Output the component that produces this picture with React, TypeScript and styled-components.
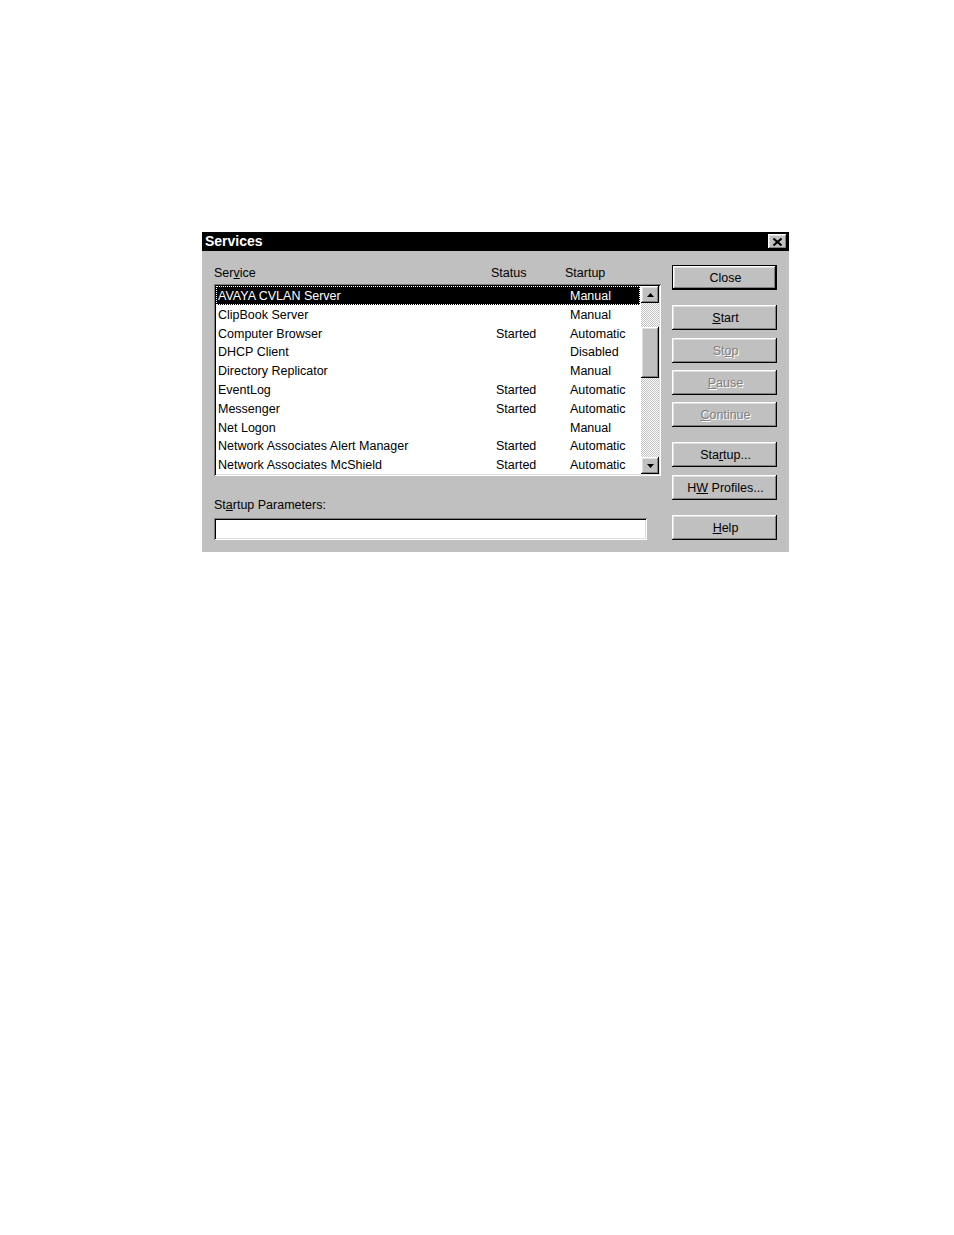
import React from 'react';
import styled, { createGlobalStyle, css } from 'styled-components';

const Global = createGlobalStyle`
  html, body { margin: 0; padding: 0; background: #fff; }
  body { font-family: "Liberation Sans", Arial, sans-serif; color: #000; }
`;

const Page = styled.div`
  width: 954px;
  height: 1235px;
  box-sizing: border-box;
  padding: 232px 0 0 202px;
`;

const Window = styled.div`
  width: 587px;
  height: 320px;
  background: #c0c0c0;
  display: flex;
  flex-direction: column;
`;

const TitleBar = styled.div`
  height: 19px;
  flex: none;
  background: #000;
  display: flex;
  align-items: center;
  justify-content: space-between;
  padding: 0 2px 0 3px;
`;

const Title = styled.span`
  color: #fff;
  font-weight: bold;
  font-size: 14px;
  line-height: 19px;
`;

const raised = css`
  box-shadow: inset -1px -1px #000, inset 1px 1px #fff, inset -2px -2px #808080, inset 2px 2px #dfdfdf;
`;

const sunken = css`
  box-shadow: inset 1px 1px #808080, inset -1px -1px #fff, inset 2px 2px #000, inset -2px -2px #dfdfdf;
`;

const TitleClose = styled.div`
  width: 19px;
  height: 15px;
  background: #c0c0c0;
  ${raised};
  display: flex;
  align-items: center;
  justify-content: center;
`;

const Body = styled.div`
  flex: 1;
  display: flex;
  gap: 11px;
  padding: 14px 12px 12px 12px;
`;

const LeftCol = styled.div`
  width: 447px;
  display: flex;
  flex-direction: column;
`;

const HeaderRow = styled.div`
  display: grid;
  grid-template-columns: 277px 74px 1fr;
  font-size: 12.5px;
  line-height: 15px;
  margin-top: 1px;
  margin-bottom: 3px;
`;

const ListBox = styled.div`
  height: 192px;
  box-sizing: border-box;
  padding: 2px;
  background: #fff;
  ${sunken};
  display: flex;
`;

const Rows = styled.div`
  flex: 1;
  display: flex;
  flex-direction: column;
`;

const Row = styled.div<{ $selected?: boolean }>`
  display: grid;
  grid-template-columns: 278px 74px 1fr;
  height: 18.8px;
  line-height: 16.8px;
  padding: 2px 0 0 2px;
  font-size: 12.5px;
  white-space: nowrap;
  box-sizing: border-box;
  ${(p) =>
    p.$selected &&
    css`
      background: #000;
      color: #fff;
      outline: 1px dotted #fff;
      outline-offset: -1px;
      margin-right: 1px;
    `}
`;

const ScrollBar = styled.div`
  width: 18px;
  display: flex;
  flex-direction: column;
`;

const ScrollButton = styled.div`
  height: 17px;
  flex: none;
  background: #c0c0c0;
  ${raised};
  display: flex;
  align-items: center;
  justify-content: center;
`;

const Track = styled.div`
  flex: 1;
  background-color: #c0c0c0;
  background-image: conic-gradient(#fff 25%, #c0c0c0 0 50%, #fff 0 75%, #c0c0c0 0);
  background-size: 2px 2px;
  display: flex;
  flex-direction: column;
`;

const Thumb = styled.div`
  margin-top: 24px;
  height: 51px;
  background: #c0c0c0;
  ${raised};
`;

const ParamLabel = styled.div`
  margin-top: 22px;
  font-size: 12.5px;
  line-height: 14px;
`;

const ParamInput = styled.div`
  margin-top: 6px;
  width: 433px;
  height: 22px;
  box-sizing: border-box;
  background: #fff;
  ${sunken};
`;

const RightCol = styled.div`
  width: 105px;
  display: flex;
  flex-direction: column;
`;

const Button = styled.div<{ $gap: number; $default?: boolean; $disabled?: boolean }>`
  margin-top: ${(p) => p.$gap}px;
  height: 25px;
  box-sizing: border-box;
  padding-top: 1px;
  padding-left: 2px;
  background: #c0c0c0;
  display: flex;
  align-items: center;
  justify-content: center;
  font-size: 12.5px;
  ${(p) =>
    p.$default
      ? css`
          border: 1px solid #000;
          box-shadow: inset -1px -1px #000, inset 1px 1px #fff, inset -2px -2px #808080, inset 2px 2px #dfdfdf;
        `
      : raised};
  ${(p) =>
    p.$disabled &&
    css`
      color: #808080;
      text-shadow: 1px 1px 0 #fff;
    `}
  u { text-decoration-thickness: 1px; text-underline-offset: 1px; }
`;

const Arrow = ({ up }: { up?: boolean }) => (
  <svg width="7" height="4" viewBox="0 0 7 4">
    {up ? <polygon points="3.5,0 7,4 0,4" fill="#000" /> : <polygon points="0,0 7,0 3.5,4" fill="#000" />}
  </svg>
);

const services: [string, string, string][] = [
  ['AVAYA CVLAN Server', '', 'Manual'],
  ['ClipBook Server', '', 'Manual'],
  ['Computer Browser', 'Started', 'Automatic'],
  ['DHCP Client', '', 'Disabled'],
  ['Directory Replicator', '', 'Manual'],
  ['EventLog', 'Started', 'Automatic'],
  ['Messenger', 'Started', 'Automatic'],
  ['Net Logon', '', 'Manual'],
  ['Network Associates Alert Manager', 'Started', 'Automatic'],
  ['Network Associates McShield', 'Started', 'Automatic'],
];

export default function App() {
  return (
    <Page>
      <Global />
      <Window>
        <TitleBar>
          <Title>Services</Title>
          <TitleClose>
            <svg width="9" height="8" viewBox="0 0 9 8">
              <path d="M0.5 0.5 L8.5 7.5 M8.5 0.5 L0.5 7.5" stroke="#000" strokeWidth="2" />
            </svg>
          </TitleClose>
        </TitleBar>
        <Body>
          <LeftCol>
            <HeaderRow>
              <span>
                Ser<u>v</u>ice
              </span>
              <span>Status</span>
              <span>Startup</span>
            </HeaderRow>
            <ListBox>
              <Rows>
                {services.map(([name, status, startup], i) => (
                  <Row key={name} $selected={i === 0}>
                    <span>{name}</span>
                    <span>{status}</span>
                    <span>{startup}</span>
                  </Row>
                ))}
              </Rows>
              <ScrollBar>
                <ScrollButton>
                  <Arrow up />
                </ScrollButton>
                <Track>
                  <Thumb />
                </Track>
                <ScrollButton>
                  <Arrow />
                </ScrollButton>
              </ScrollBar>
            </ListBox>
            <ParamLabel>
              St<u>a</u>rtup Parameters:
            </ParamLabel>
            <ParamInput />
          </LeftCol>
          <RightCol>
            <Button $gap={0} $default>
              Close
            </Button>
            <Button $gap={15}>
              <span>
                <u>S</u>tart
              </span>
            </Button>
            <Button $gap={8} $disabled>
              <span>
                St<u>o</u>p
              </span>
            </Button>
            <Button $gap={7} $disabled>
              <span>
                <u>P</u>ause
              </span>
            </Button>
            <Button $gap={7} $disabled>
              <span>
                <u>C</u>ontinue
              </span>
            </Button>
            <Button $gap={15}>
              <span>
                Sta<u>r</u>tup...
              </span>
            </Button>
            <Button $gap={8}>
              <span>
                H<u>W</u> Profiles...
              </span>
            </Button>
            <Button $gap={15}>
              <span>
                <u>H</u>elp
              </span>
            </Button>
          </RightCol>
        </Body>
      </Window>
    </Page>
  );
}
